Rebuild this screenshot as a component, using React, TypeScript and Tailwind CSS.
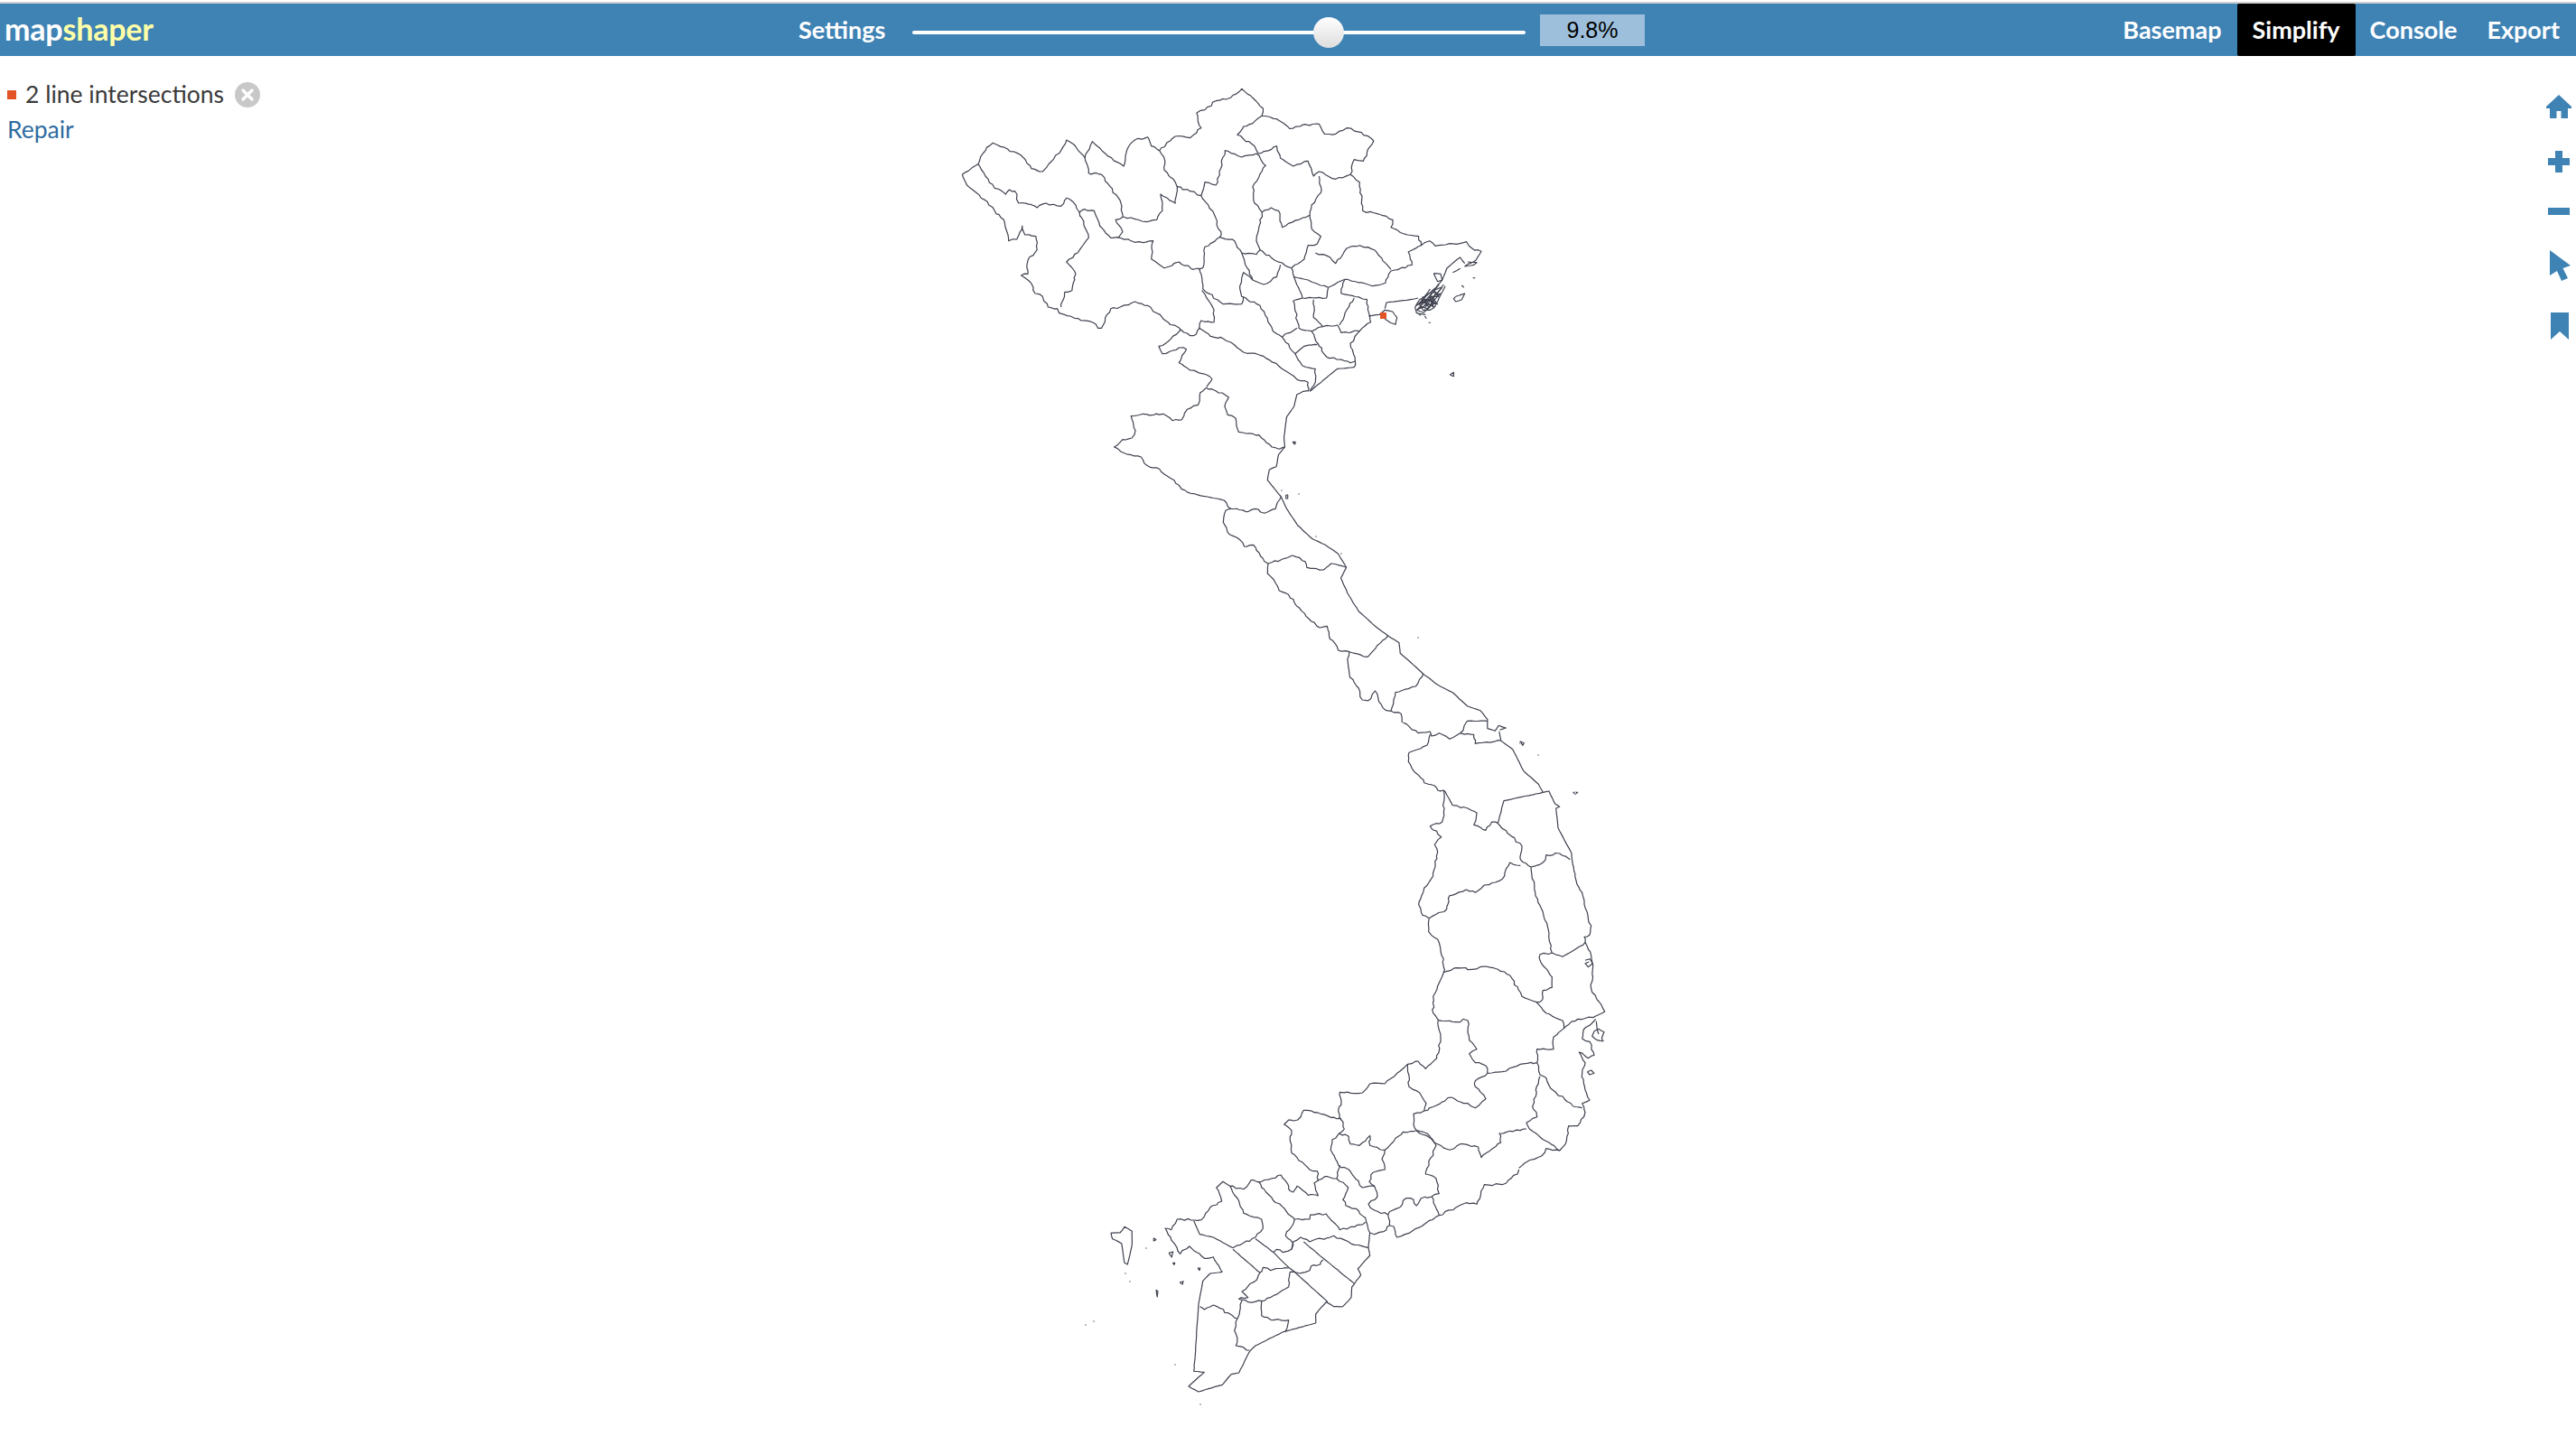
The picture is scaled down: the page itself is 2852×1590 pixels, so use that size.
import { X } from "lucide-react";

// Map outlines, traced from crops. Each block has its own crop origin and scale.
// A line starting with ~ is smooth coast and gets almost no wobble.
type Block = { ox: number; oy: number; sx: number; sy: number; lines: string[] };

const blocks: Block[] = [
  {
    ox: 1040, oy: 80, sx: 2.45, sy: 3,
    lines: [
      "62,340 105,305 118,270 145,235 185,255 225,280 250,320 280,330 305,295 330,260 345,225 365,240 395,285 415,230 450,270 500,312 512,250 530,225 565,215 575,245 597,260 640,213 680,218 710,185 698,135 720,125 750,95 790,85 820,55 850,85 878,120 875,145 915,155 950,187 985,175 1030,172 1045,205 1075,205 1105,185 1145,200 1178,228 1160,265 1150,295 1125,290 1115,340 1140,365 1148,460 1200,475 1230,490 1225,515 1270,540 1300,545 1307,575 1330,560 1345,577 1430,563 1445,585 1470,595 1455,625 1425,645",
      "1307,575 1272,597 1282,640 1225,660 1210,700 1175,710 1100,688 1090,720 1090,735 1160,755 1165,800 1170,830 1140,860 1115,900 1128,960 1125,980",
      "~1125,980 1080,985 1050,1015 1005,1060",
      "62,340 75,375 100,400 130,430 150,460 175,490 188,560 210,555 225,510 232,540 262,545 265,590 240,625 240,670 222,675 245,695 260,735 280,745 295,780 320,785 325,800 355,810 385,825 415,830 430,850 440,850 450,815 465,785 490,780 530,762 565,775 590,800 620,830 655,855 680,875 690,875 705,850 745,880 770,885 800,905 825,930 870,940 920,975 980,1025 1000,1030 1000,1060",
      "105,305 125,345 150,385 180,405 190,390 205,395 215,435 250,440 265,450 290,435 330,445 345,418 362,430 380,465 395,455 420,460 435,510 465,550 490,550 530,565 580,560 575,620 610,650 650,630 690,655 715,650 720,580 760,548 795,555 820,600 860,605 870,590 910,625 955,650",
      "380,465 405,550 375,600 345,630 370,670 360,725 340,730 330,780",
      "395,285 405,335 440,340 490,425 498,480 550,495 590,490 605,460 600,405 640,435 645,380 680,395 710,410 745,470 765,540 760,548",
      "498,480 478,490 497,530 485,550",
      "597,260 612,295 610,325 640,365 645,380",
      "710,410 720,365 750,375 775,260 820,282 860,270 885,310 850,380 855,435 875,465 860,560 870,590",
      "875,145 850,170 825,180 808,208 855,245 865,270 915,245 925,285 960,312 1000,295 1015,345 1030,330 1075,355 1115,340",
      "1030,345 1035,400 1010,440 1005,475 975,490 930,515 920,460 900,450 875,465",
      "1005,475 1010,520 1035,545 1025,570 1000,575 990,620 955,650",
      "1020,600 1060,615 1075,635 1105,585 1140,575 1180,590 1225,655",
      "955,650 962,680 1000,690 1055,715 1100,688",
      "962,680 985,750 1050,750 1055,715",
      "985,750 960,760 975,850 1010,860 1040,845 1080,840 1090,865 1140,860",
      "1015,755 1015,815 1040,845",
      "1125,750 1100,800 1090,830 1085,840",
      "925,640 915,680 880,705 850,690 825,665 815,710 820,745 870,775 905,860 930,880 950,915 965,935 990,910 1025,905",
      "930,880 970,850",
      "1010,860 1030,910 1050,945 1115,965 1128,960",
      "965,935 985,975 1020,985 1020,1030 1005,1060",
      "820,600 835,650 850,690",
      "705,650 715,720 770,770 820,770 825,745",
      "712,725 745,790 745,830 710,825 705,850",
      "655,855 620,895 595,910 605,935 650,915 670,920 650,965 680,990 725,1005 740,1020 725,1045",
      "1385,1005 1395,997 1395,1010 1385,1005",
    ],
  },
  // Cat Ba and the bay islands
  {
    ox: 1500, oy: 260, sx: 3, sy: 3,
    lines: [
      "~45,270 82,265 100,250 125,255 140,275 135,298 118,292 100,280",
      "~100,245 105,225 185,215 210,210",
      "~365,95 350,75 330,90 305,112 290,150 270,175 240,200 215,215 200,240 205,260 235,265",
      "~262,128 285,130 290,150 275,155 262,128",
      "~365,105 395,100 405,92 375,90",
      "~325,125 350,112",
      "~300,170 280,210 265,240 250,250 225,250",
      "~280,165 255,195 225,230 210,245 235,240 262,205 290,175",
      "~265,180 240,220 220,225 245,195 270,190 250,235 235,215",
      "~225,205 245,240 270,225 258,205 230,235",
      "~250,180 225,215 205,235 240,215 262,225 240,245 218,238",
      "~295,165 270,200 285,195 255,225 275,230 250,215 222,215 240,232 205,250 228,258 250,240",
      "~285,175 262,185 278,205 248,205 262,240 232,225 215,232 225,248",
      "~335,205 365,195 355,215 335,222 328,212 335,205",
      "~355,168 362,175",
      "~392,143 400,143",
      "~245,292 251,292",
      "~232,270 238,278",
      "~212,262 218,268",
    ],
  },
  {
    ox: 1200, oy: 400, sx: 2.45, sy: 3,
    lines: [
      "332,88 315,105 310,145 280,160 265,195 240,197 215,175 190,178 160,175 128,182 140,230 130,255 105,260 82,285 110,305 155,318 170,345 205,358 225,380 245,395 265,425 300,440 335,450 380,462 398,490",
      "332,88 375,105 393,120 382,150 390,178 412,190 420,235 440,240 475,245 510,285 530,292 545,285",
      "~610,98 595,100 578,110 570,150 550,185 543,250 545,285 528,310 522,350 503,360 498,395 515,420 535,450 550,490 580,545 620,590 655,610 690,640 712,685 697,720 715,770 745,830 790,880 825,912 855,935 858,970 900,1015 920,1038 960,1075 1000,1100 1040,1145 1075,1160 1095,1190 1095,1220 1115,1228 1125,1210 1145,1218 1128,1225",
      "535,450 520,490 490,505 465,490 440,500 415,490 398,490 385,495 378,535 395,575 425,595 435,615 460,610 490,665 500,672 545,655 565,645 600,665 605,685 650,693 670,672 712,685",
      "500,672 498,705 515,725 530,762 555,775 610,855 640,885 660,880 665,910 690,960 720,965 770,982 795,945 825,912",
      "720,965 715,990 722,1050 745,1085 755,1125 770,1128 790,1095 800,1130 820,1160 833,1162 840,1125 845,1100 900,1080 920,1038",
      "833,1162 860,1170 863,1200",
      "~1037,1200 1040,1195 1095,1195",
      "~566,268 574,268 572,276 566,268",
      "~548,444 553,444 553,456 548,456 548,444",
    ],
  },
  {
    ox: 1350, oy: 800, sx: 3, sy: 3,
    lines: [
      "~930,30 935,60 975,90 1010,160 1060,205 1075,232 1095,228 1115,270 1130,280 1118,285 1125,350 1170,435",
      "1170,435 1185,525 1205,565 1225,650 1235,675 1230,705 1212,712 1215,730 1235,775 1240,820 1235,885 1280,960 1250,975 1190,985 1145,1015",
      "1250,985 1210,1020 1205,1050 1230,1060 1245,1105 1225,1115 1195,1095 1215,1130 1205,1165 1215,1220 1230,1255 1205,1265 1215,1295 1190,1340 1160,1340 1150,1400 1130,1422 1085,1415 1070,1440 1020,1460 995,1480",
      "610,0 660,35 700,30 705,45 730,35 765,55 800,35 820,0",
      "800,35 845,40 850,70 935,60",
      "700,40 690,75 630,100 628,130 645,160 670,185 680,200 715,210 725,225 745,225 755,240 775,275 825,285 855,300 845,340 885,358 905,330 925,335 1005,410 1000,455 1035,480 1075,465 1085,440 1130,435 1165,455",
      "~925,335 945,260 1075,232",
      "745,225 745,300 740,330 700,345 737,380 715,405 725,430 710,510 680,550 662,605 675,640 697,650 695,695 725,720 745,785 745,830 710,910 710,965 727,988 735,1050 722,1115 685,1150 660,1125 625,1135",
      "697,650 755,620 765,575 820,555 850,565 880,540 940,520 965,465 1000,475",
      "1035,480 1050,575 1075,630 1095,700 1105,765 1140,778 1195,745 1215,730",
      "1105,765 1065,770 1065,790 1105,845 1105,880 1075,890 1070,925 1052,928 1005,910 965,840 925,820 885,810 840,820 790,815 745,830",
      "1052,928 1085,965 1140,990 1145,1015 1110,1045 1110,1085 1055,1085 1055,1130 1000,1135 940,1160 890,1165 885,1140 850,1130 830,1100 855,1085 830,1055 825,990 810,985 800,995 727,988",
      "1055,1130 1065,1170 1085,1180 1100,1215 1175,1275 1205,1280",
      "1065,1175 1040,1275 1055,1310 1020,1330 1030,1350 1075,1385 1130,1422",
      "890,1165 850,1190 850,1210 885,1250 850,1280 825,1265 800,1260 770,1245 740,1260 680,1290",
      "655,1355 700,1380 725,1400 765,1420 800,1400 860,1410 870,1445 935,1395 930,1365 1020,1350",
      "~1215,790 1230,785 1240,800 1225,812 1215,800 1228,795",
      "~1175,232 1190,232 1182,238 1175,232",
      "~998,62 1012,68 1008,76 998,62",
    ],
  },
  // Islands off the cape
  {
    ox: 1720, oy: 1100, sx: 3, sy: 3,
    lines: [
      "~135,125 150,118 168,128 160,150 165,158 145,155 128,142 135,125",
      "~142,92 145,120 150,135",
      "~112,260 125,255 135,265 120,270 112,260",
    ],
  },
  {
    ox: 1200, oy: 1180, sx: 3, sy: 3,
    lines: [
      "1075,-5 1040,25 1000,60 950,60 925,90 850,88 855,120 845,150 855,180 865,210 848,225 825,245 820,280 845,330 880,345 925,405 965,400 975,435 945,460 965,480 1010,495 1015,530 1005,545 965,560 950,555 935,505 905,475 870,465 860,445 878,405 840,375",
      "1075,-5 1080,70 1115,90 1137,125 1130,150 1095,160 1095,195 1105,215 1140,225 1170,265 1140,340 1135,360 1170,375 1180,425 1155,435 1120,440 1105,465 1095,445 1070,440 1050,470 1015,485 1010,495",
      "1105,215 1060,220 1030,250 1000,280 950,265 950,232 915,265 885,260 880,235 848,225",
      "1000,280 990,310 1000,345 960,355 948,385 965,400",
      "850,330 840,375 800,368 778,380 775,350 750,345 725,320 690,290 685,250 690,215 665,195 680,180 710,180 730,148 775,155 820,172 855,175",
      "780,380 765,390 778,432 745,430 708,400 695,420 680,410 680,400 655,363 590,385 555,380 530,410 485,400 462,385 440,405 458,450 420,470 390,512 310,510 290,545 270,540 300,590 320,625 350,600 385,625 400,640 430,635 460,685",
      "~460,685 420,690 395,715 385,770 380,800 370,960 365,1015 400,1018 375,1040 348,1065 380,1083 460,1060 490,1025 515,1020 550,950 570,930 660,885 770,855 770,825 805,785 830,800 860,800 888,770 890,735 920,695 910,675 950,630 945,605 950,555",
      "580,385 605,420 700,510",
      "700,510 750,510 752,495 805,492 850,545 900,535 935,520",
      "485,400 515,450 530,490 590,510 595,540 570,570 520,595 495,605",
      "~495,605 430,570 385,560 365,515",
      "~495,610 585,688",
      "585,688 595,670 620,680 680,672",
      "~570,575 630,620 680,670 700,685 810,785",
      "700,510 670,565 695,590 690,610 660,620 640,610 630,620",
      "690,610 695,585 720,570 750,585 830,565 900,595 945,605",
      "~730,585 795,640 900,725",
      "795,645 785,660 755,665 750,680 715,690 685,685 680,735 640,760 590,782 545,785 515,775 545,770 525,750 575,710 585,688",
      "590,782 590,830 630,845 680,845 668,885",
      "525,780 510,840 500,880 510,905 505,930 550,945",
      "510,840 430,795 400,810 385,800",
      "~90,555 120,555 135,535 160,550 160,595 145,660 135,655 125,590 95,575 90,555",
      "1445,345 1440,360 1390,395 1330,395 1305,460 1270,455 1180,497 1140,520 1090,550 1040,570 1030,535 1015,530",
      "1155,435 1180,497",
      "~378,672 386,672 384,680 378,672",
      "~318,720 330,716 328,726 318,720",
      "~295,655 302,655 300,661 295,655",
      "~240,745 246,750 244,768 240,745",
      "~282,622 296,618 292,636 282,622",
      "~232,572 240,578 232,582 232,572",
    ],
  },
];

// Faint specks of tiny islands
const specks = [
  [1245, 1409], [1250, 1418], [1268, 1381], [1210, 1462], [1201, 1466], [1300, 1510], [1328, 1554],
  [1418, 542], [1437, 546], [1456, 593], [1484, 612], [1569, 705], [1682, 822], [1702, 835], [1743, 877],
];

// Small pseudo random so the borders get the same fine wobble on every run
function noise(n: number) {
  const v = Math.sin(n * 12.9898) * 43758.5453;
  return v - Math.floor(v) - 0.5;
}

function buildPath({ ox, oy, sx, sy }: Block, line: string, seed: number) {
  const smooth = line.startsWith("~");
  const pts = line.replace("~", "").split(" ").map((p) => {
    const [x, y] = p.split(",").map(Number);
    return [ox + x / sx, oy + y / sy];
  });
  let d = `M${pts[0][0].toFixed(1)} ${pts[0][1].toFixed(1)}`;
  let k = seed * 17;
  for (let i = 1; i < pts.length; i++) {
    const [ax, ay] = pts[i - 1];
    const [bx, by] = pts[i];
    const steps = Math.max(1, Math.round(Math.hypot(bx - ax, by - ay) / 4));
    for (let s = 1; s <= steps; s++) {
      const t = s / steps;
      const wob = s === steps ? 0 : smooth ? 0.4 : 2.2;
      k++;
      const x = ax + (bx - ax) * t + noise(k) * wob;
      const y = ay + (by - ay) * t + noise(k + 0.5) * wob;
      d += `L${x.toFixed(1)} ${y.toFixed(1)}`;
    }
  }
  return d;
}

function VietnamMap() {
  let seed = 0;
  return (
    <svg
      className="absolute top-0 left-0 w-[2852px] h-[1590px] pointer-events-none"
      viewBox="0 0 2852 1590"
      fill="none"
    >
      {blocks.map((b) =>
        b.lines.map((line) => {
          seed++;
          return <path key={seed} d={buildPath(b, line, seed)} stroke="#3f424f" strokeWidth="1.2" strokeLinejoin="round" />;
        })
      )}
      {specks.map(([x, y]) => (
        <rect key={`${x}-${y}`} x={x} y={y} width="2" height="2" fill="#b9bbc2" />
      ))}
      <rect x="1528" y="346" width="7" height="7" fill="#e25425" />
    </svg>
  );
}

function HomeIcon() {
  return (
    <svg width="28" height="26" viewBox="0 0 28 26" fill="#3f83b5">
      <path d="M14 0 L28 13 V15 H24 V26 H16.5 V18 H11.5 V26 H4 V15 H0 V13 Z" />
    </svg>
  );
}

function PlusIcon() {
  return (
    <svg width="24" height="24" viewBox="0 0 24 24" fill="#3f83b5">
      <path d="M8 0 H16 V8 H24 V16 H16 V24 H8 V16 H0 V8 H8 Z" />
    </svg>
  );
}

function MinusIcon() {
  return (
    <svg width="24" height="8" viewBox="0 0 24 8" fill="#3f83b5">
      <rect width="24" height="8" />
    </svg>
  );
}

function CursorIcon() {
  return (
    <svg width="23" height="34" viewBox="0 0 23 34" fill="#3f83b5">
      <path d="M0 0 L23 17 L14.5 20 L20 31 L13 34 L8 23 L0 28 Z" />
    </svg>
  );
}

function BookmarkIcon() {
  return (
    <svg width="20" height="30" viewBox="0 0 20 30" fill="#3f83b5">
      <path d="M0 0 H20 V30 L10 21 L0 30 Z" />
    </svg>
  );
}

const navItems = ["Basemap", "Simplify", "Console", "Export"];

export default function App() {
  return (
    <div className="relative w-[2852px] h-[1590px] overflow-hidden bg-white font-['Lato','Noto_Sans',sans-serif]">
      <VietnamMap />

      <div className="h-[2px] bg-white" />
      <div className="h-[2px] bg-[#cfcfcf]" />

      <header className="relative flex items-stretch h-[58px] bg-[#3f83b5] text-white">
        <div className="ml-[5px] self-center text-[34px] font-bold leading-none tracking-[-0.2px] pb-[3px]">
          map<span className="text-[#ffffa8]">shaper</span>
        </div>

        <div className="absolute left-[884px] top-0 h-full flex items-center">
          <span className="text-[27px] font-bold leading-none w-[97px] pb-[2px]">Settings</span>
          <div className="relative ml-[29px] w-[679px] h-[4px] mt-[6px] rounded-full bg-white">
            <div className="absolute left-[444px] top-[-15px] w-[34px] h-[34px] rounded-full bg-gradient-to-b from-white to-[#dddddd]" />
          </div>
          <div className="ml-[16px] w-[116px] h-[35px] mt-[1px] bg-[#9dbfdb] text-black text-center text-[25px] leading-[35px] font-['Liberation_Sans',sans-serif]">
            9.8%
          </div>
        </div>

        <nav className="ml-auto flex items-stretch pr-[1px]">
          {navItems.map((item) => (
            <div
              key={item}
              className={
                item === "Simplify"
                  ? "flex items-center px-[17px] bg-black rounded-[2px] text-[27px] font-bold"
                  : item === "Console"
                    ? "flex items-center px-[16px] text-[27px] font-bold"
                    : "flex items-center px-[17px] text-[27px] font-bold"
              }
            >
              {item}
            </div>
          ))}
        </nav>
      </header>

      <main className="relative pl-[8px] pt-[23px] text-[26.5px] leading-[39px]">
        <div className="flex items-center text-[#3a3a3a]">
          <span className="w-[10px] h-[10px] bg-[#e25425]" />
          <span className="ml-[10px]">2 line intersections</span>
          <span className="ml-[12px] flex items-center justify-center w-[28px] h-[28px] rounded-full bg-[#c8c8c8] text-white">
            <X size={20} strokeWidth={4} />
          </span>
        </div>
        <div className="text-[#2f6ca0]">Repair</div>
      </main>

      <div className="absolute top-[105px] right-[5px] w-[28px] flex flex-col items-center">
        <HomeIcon />
        <div className="mt-[36px]"><PlusIcon /></div>
        <div className="mt-[39px]"><MinusIcon /></div>
        <div className="mt-[39px] ml-[3px]"><CursorIcon /></div>
        <div className="mt-[35px] ml-[2px]"><BookmarkIcon /></div>
      </div>
    </div>
  );
}
